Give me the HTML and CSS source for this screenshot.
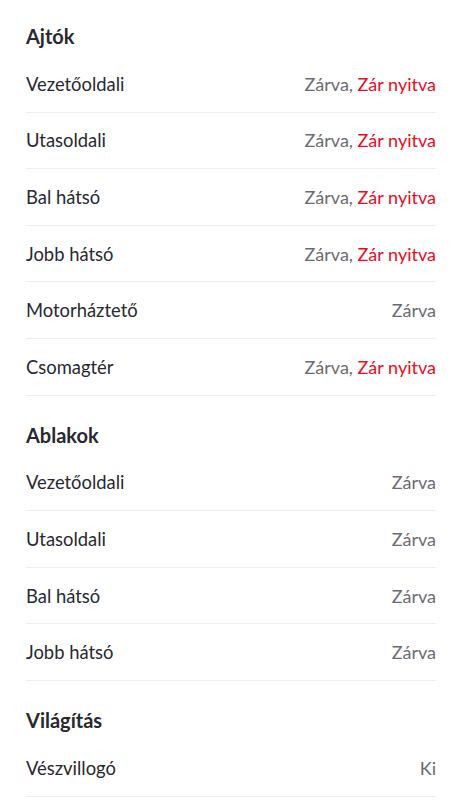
FILE: index.html
```html
<!DOCTYPE html>
<html lang="hu">

<head>
    <meta charset="UTF-8">
    <meta name="viewport" content="width=device-width, initial-scale=1.0">
    <title>Állapot</title>
    <link rel="stylesheet" href="styles.css">
</head>

<body>
    <div class="section">
        <h2 class="title">Ajtók</h2>
        <div class="row"><span class="label">Vezetőoldali</span><span class="value">Zárva, <em class="alert">Zár nyitva</em></span></div>
        <div class="row"><span class="label">Utasoldali</span><span class="value">Zárva, <em class="alert">Zár nyitva</em></span></div>
        <div class="row"><span class="label">Bal hátsó</span><span class="value">Zárva, <em class="alert">Zár nyitva</em></span></div>
        <div class="row"><span class="label">Jobb hátsó</span><span class="value">Zárva, <em class="alert">Zár nyitva</em></span></div>
        <div class="row"><span class="label">Motorháztető</span><span class="value">Zárva</span></div>
        <div class="row"><span class="label">Csomagtér</span><span class="value">Zárva, <em class="alert">Zár nyitva</em></span></div>
    </div>
    <div class="section">
        <h2 class="title">Ablakok</h2>
        <div class="row"><span class="label">Vezetőoldali</span><span class="value">Zárva</span></div>
        <div class="row"><span class="label">Utasoldali</span><span class="value">Zárva</span></div>
        <div class="row"><span class="label">Bal hátsó</span><span class="value">Zárva</span></div>
        <div class="row"><span class="label">Jobb hátsó</span><span class="value">Zárva</span></div>
    </div>
    <div class="section">
        <h2 class="title">Világítás</h2>
        <div class="row"><span class="label">Vészvillogó</span><span class="value">Ki</span></div>
    </div>
</body>

</html>
```

FILE: styles.css
```css
body {
    margin: 0;
    padding: 24px 26px;
    font-family: Lato, "Noto Sans", sans-serif;
    background: #fff;
    color: #282830;
}

.section + .section {
    margin-top: 27px;
}

.title {
    margin: 0 0 8px;
    font-size: 20px;
    line-height: 24px;
    font-weight: 700;
}

/* sor: címke balra, érték jobbra */
.row {
    display: flex;
    justify-content: space-between;
    align-items: center;
    height: 55.6px;
    border-bottom: 1px solid #efefef;
    font-size: 18px;
}

.label {
    font-size: 18.4px;
}

.value {
    color: #6b6b73;
}

.alert {
    font-style: normal;
    color: #eb0a1e;
}
```
